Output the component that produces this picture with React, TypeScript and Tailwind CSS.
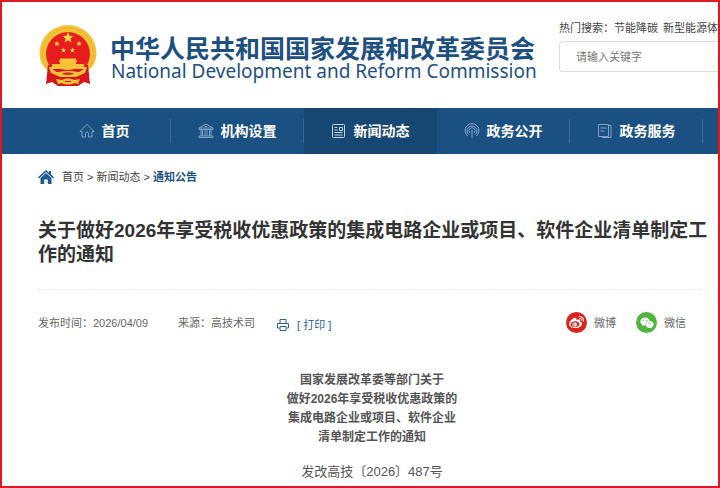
import type { ReactNode } from "react";
import { FaWeibo, FaWeixin } from "react-icons/fa";

function Emblem() {
  return (
    <svg viewBox="0 0 60 64" className="h-16 w-[60px] shrink-0" role="img" aria-label="国徽">
      <path d="M30 1a28.500 28.500 0 0 1 28.500 28.500c0 7-3 13-8 16.500h-41c-5-3.500-8-9.500-8-16.500A28.500 28.500 0 0 1 30 1z" fill="#f3c236" />
      <circle cx="30" cy="29.500" r="25.500" fill="none" stroke="#e6b02e" strokeWidth="1" strokeDasharray="6 2" />
      <path d="M10 41l-2 19 6-2 6 4h20l6-4 6 2-2-19z" fill="#d8141c" />
      <circle cx="30" cy="30" r="22" fill="#e81e1e" />
      <path d="M30 8l1.500 3.800 4 .2-3.100 2.600 1 4L30 16.300l-3.400 2.300 1-4-3.100-2.600 4-.2z" fill="#ffd94a" />
      <path d="M19 17l.8 1.700 1.900.1-1.400 1.300.4 1.900-1.700-1-1.700 1 .4-1.900-1.400-1.300 1.900-.1zM41 17l.8 1.700 1.900.1-1.400 1.300.4 1.900-1.700-1-1.700 1 .4-1.900-1.400-1.300 1.900-.1zM25.500 23.500l.8 1.700 1.900.1-1.400 1.300.4 1.900-1.700-1-1.700 1 .4-1.900-1.400-1.300 1.900-.1zM34.500 23.500l.8 1.700 1.900.1-1.400 1.300.4 1.900-1.700-1-1.700 1 .4-1.900-1.400-1.300 1.900-.1z" fill="#ffd94a" />
      <path d="M22 34.500h16l1 3.500h-1v2h8v4H14v-4h8v-2h-1z" fill="#f3c236" />
      <path d="M11 43h38l-2 6-9 4H22l-9-4z" fill="#f3c236" />
      <path d="M14 45h8c3 0 4 1 8 1s5-1 8-1h8l-5 3c-4 0-5-1-11-1s-7 1-11 1zM24 50c3-2 9-2 12 0-3 1-9 1-12 0z" fill="#d8141c" />
      <path d="M18 55l6 1c3-2 9-2 12 0l6-1-2 5-4-1c-3 2-9 2-12 0l-4 1z" fill="#f3c236" />
      <path d="M27 57.500h6" stroke="#d8141c" strokeWidth="1" />
    </svg>
  );
}

function LineIcon({ children }: { children: ReactNode }) {
  return (
    <svg viewBox="0 0 16 16" className="size-4 shrink-0" fill="none" stroke="currentColor" strokeWidth="1" aria-hidden="true">
      {children}
    </svg>
  );
}

const navItems = [
  {
    label: "首页",
    tone: "text-[#7fa3c6]",
    icon: <path d="M1 8.500L8 1.500l7 7h-2V14H9.500v-3.500a1.500 1.500 0 0 0-3 0V14H3V8.500z" />,
  },
  {
    label: "机构设置",
    tone: "text-[#7fa3c6]",
    icon: <path d="M8 1L1 5h14zM1 5v1.500h14V5M3 6.500V13M4.500 6.500V13M7 6.500V13M9 6.500V13M11.500 6.500V13M13 6.500V13M1 13h14v1.500H1zM7 3.500h2" />,
  },
  {
    label: "新闻动态",
    tone: "text-[#c3d3e3]",
    active: true,
    icon: <path d="M2.500 1.500h10a1 1 0 0 1 1 1v11a1 1 0 0 1-1 1h-10a1 1 0 0 1-1-1v-11a1 1 0 0 1 1-1zM3.500 4.500h3M3.500 7h3M8.500 4.500h3v3h-3zM3.500 9.500h8M3.500 12h8" />,
  },
  {
    label: "政务公开",
    tone: "text-[#7fa3c6]",
    icon: <path d="M3.500 13a7 7 0 1 1 9 0M4.500 11.500a5 5 0 1 1 7 0M6 10a3 3 0 1 1 4 0M8 7v8M7.500 7.500h1" />,
  },
  {
    label: "政务服务",
    tone: "text-[#7fa3c6]",
    icon: <path d="M1.500 1.500h10v12h-10zM11.500 2.500H14v12H5M3.500 5h6M3.500 8h4" />,
  },
];

export default function App() {
  return (
    <div className="min-h-screen overflow-hidden border-2 border-[#dd1a21] bg-white font-['Liberation_Sans','Noto_Sans_CJK_SC',sans-serif] text-[11px] leading-4 text-[#555]">
      <header className="flex items-start pl-9">
        <a href="#home" className="flex shrink-0 items-start gap-3 pt-[22px] pb-5 text-[#1d5080]">
          <Emblem />
          <span className="flex flex-col pt-[9px]">
            <span className="font-['Noto_Sans_CJK_SC',sans-serif] text-[25px] leading-7 font-bold whitespace-nowrap">
              中华人民共和国国家发展和改革委员会
            </span>
            <span className="pl-px font-['Noto_Sans',sans-serif] text-[19px] leading-5 whitespace-nowrap">
              National Development and Reform Commission
            </span>
          </span>
        </a>
        <form className="ml-auto w-[159px] shrink-0 pt-[18px]">
          <p className="flex whitespace-nowrap text-[#444]">
            <label htmlFor="search">热门搜索：</label>
            <a href="#carbon">节能降碳</a>
            <a href="#energy" className="ml-[5px]">新型能源体</a>
          </p>
          <input
            id="search"
            type="text"
            placeholder="请输入关键字"
            className="mt-[5px] h-[31px] w-full rounded-l-sm border border-r-0 border-[#ddd] px-4 text-[11px] outline-none placeholder:text-[#777]"
          />
        </form>
      </header>

      <nav className="flex overflow-hidden bg-[#1b5182] pl-9">
        {navItems.map((item) => (
          <a
            key={item.label}
            href={"#" + item.label}
            className={
              item.active
                ? "flex w-[133px] shrink-0 items-center bg-[#174873]"
                : "flex w-[133px] shrink-0 items-center"
            }
          >
            <span className="flex h-[46px] grow items-center justify-center gap-[7px] text-sm font-bold text-white">
              <span className={item.tone}>
                <LineIcon>{item.icon}</LineIcon>
              </span>
              {item.label}
            </span>
            <span className={item.active ? "h-6 w-px" : "h-6 w-px bg-[#3b6b98]"} />
          </a>
        ))}
      </nav>

      <div className="flex items-center gap-2 pt-[15px] pl-9 text-[#444]">
        <svg viewBox="0 0 16 14" className="h-[14px] w-4" fill="#1d5a91" aria-hidden="true">
          <path d="M8 0l3 2.800V1h2v3.600L16 7.300l-1 1.100-7-6.300-7 6.300L0 7.300z" />
          <path d="M8 3l5.500 5V14H9.800V9.500H6.200V14H2.500V8z" />
        </svg>
        <p>
          <a href="#home">首页</a> &gt; <a href="#news">新闻动态</a> &gt;{" "}
          <a href="#notice" className="font-bold text-[#1d5080]">通知公告</a>
        </p>
      </div>

      <main className="pl-9">
        <h1 className="pt-[34px] pr-2 text-[19px] leading-6 font-bold text-[#333]">
          关于做好2026年享受税收优惠政策的集成电路企业或项目、软件企业清单制定工作的通知
        </h1>
        <div className="mt-[22px] mr-3 flex items-center border-t border-dashed border-[#e8e8e8] pt-[22px] text-[#666]">
          <span>发布时间：2026/04/09</span>
          <span className="ml-[30px]">来源：高技术司</span>
          <button type="button" className="ml-[22px] flex items-center gap-2 pt-1 text-[#2c5f8f]">
            <svg viewBox="0 0 12 12" className="size-3" fill="none" stroke="currentColor" aria-hidden="true">
              <path d="M3 4.500v-4h6v4M2.500 9H.5V4.500h11V9h-2M3 7.500h6v4H3z" />
            </svg>
            [ 打印 ]
          </button>
          <div className="ml-auto flex gap-5 pr-5">
            <a href="#weibo" className="flex items-center gap-[7px]">
              <span className="flex size-[21px] items-center justify-center rounded-full bg-[#d9231c] text-white">
                <FaWeibo size={15} />
              </span>
              微博
            </a>
            <a href="#wechat" className="flex items-center gap-[7px]">
              <span className="flex size-[21px] items-center justify-center rounded-full bg-[#4bb53c] text-white">
                <FaWeixin size={14} />
              </span>
              微信
            </a>
          </div>
        </div>
        <article className="mr-3 pt-[38px] text-center">
          <h2 className="text-xs leading-[19px] font-bold text-[#555]">
            国家发展改革委等部门关于
            <br />
            做好2026年享受税收优惠政策的
            <br />
            集成电路企业或项目、软件企业
            <br />
            清单制定工作的通知
          </h2>
          <p className="pt-[15px] text-[13px] leading-[19px]">发改高技〔2026〕487号</p>
        </article>
      </main>
    </div>
  );
}
